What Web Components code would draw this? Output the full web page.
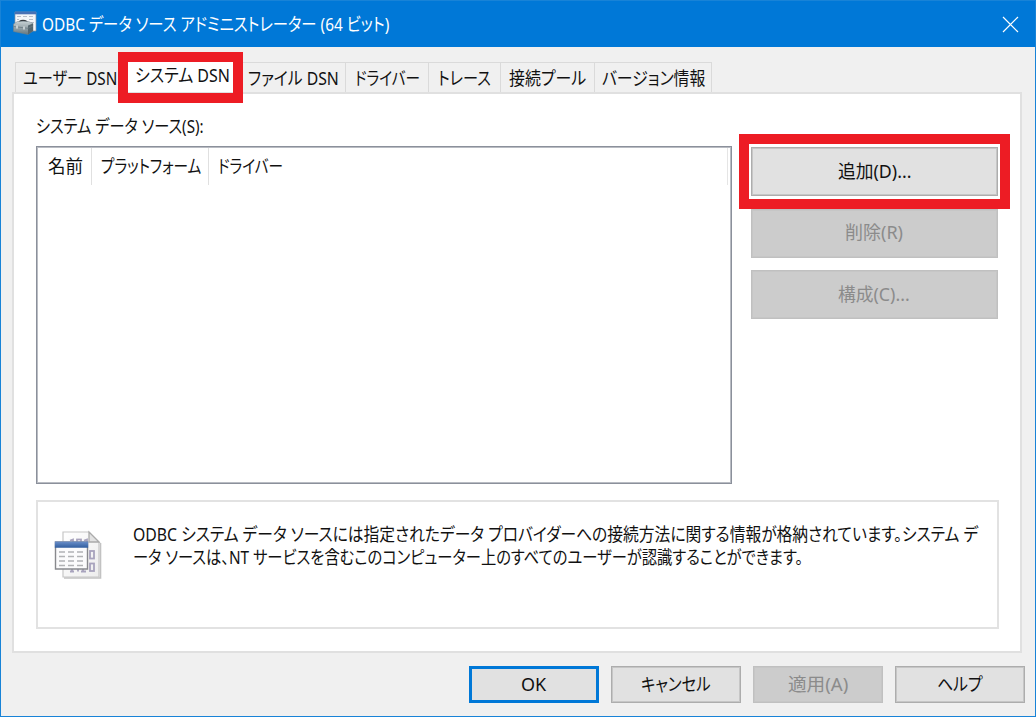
<!DOCTYPE html>
<html lang="ja">
<head>
<meta charset="utf-8">
<title>ODBC データ ソース アドミニストレーター (64 ビット)</title>
<style>
  html, body { margin: 0; height: 100%; overflow: hidden; }
  body {
    font: 18px/24px "Noto Sans", "Noto Sans CJK JP", sans-serif;
    font-feature-settings: "palt";
    color: #111;
  }
</style>
</head>
<body>
<odbc-dialog></odbc-dialog>

<script>
// One line of text squeezed to a given width
class FitText extends HTMLElement {
  constructor() {
    super();
    this.attachShadow({ mode: 'open' }).innerHTML = `
      <style>
        :host { display: block; flex: none; height: 24px; line-height: 24px; white-space: nowrap; }
        span { display: inline-block; transform-origin: 0 50%; }
      </style>
      <span><slot></slot></span>
    `;
  }

  connectedCallback() {
    const span = this.shadowRoot.querySelector('span');
    const width = Number(this.getAttribute('w'));
    const natural = span.offsetWidth;
    this.style.width = width + 'px';
    span.style.transform = `scaleX(${width / natural})`;
    // the box keeps its natural width after scaling, take the rest back
    if (natural > width) span.style.marginRight = (width - natural) + 'px';
  }
}

class TitleBar extends HTMLElement {
  constructor() {
    super();
    this.attachShadow({ mode: 'open' }).innerHTML = `
      <style>
        :host { display: flex; align-items: center; height: 46px; padding: 0 16px 0 12px; background: #0078d7; color: #fff; }
        .icon { flex: none; margin: 0 5px 2px 0; }
        .close { margin-left: auto; }
      </style>
      <svg class="icon" width="24" height="24" viewBox="0 0 24 24">
        <defs>
          <linearGradient id="box" x2="0" y2="1"><stop stop-color="#c5d0d3"/><stop offset="1" stop-color="#65777e"/></linearGradient>
        </defs>
        <path d="M2 1h21v19H2z" fill="#f3f5f8" stroke="#8995a5" stroke-width=".7"/>
        <path d="M2 .7h21v2.600H2z" fill="#4771b5"/>
        <path d="M4 5.500h4M10 5.500h4M16 5.500h4M4 8.500h2M16 8.500h4M18 11.500h3" stroke="#b7bdc7"/>
        <path d="M6 12.500c0-4 8-4 8.500 0" fill="none" stroke="#363c40" stroke-width="1.600"/>
        <path d="M.5 13l4-2.500h11l4.500 2v7.500l-5 3.500-14.500-3z" fill="url(#box)" stroke="#71828a" stroke-width=".5"/>
        <path d="M15 14.500l5-2v7.500l-5 3.500z" fill="#56676f"/>
        <path d="M.5 15.500l14.500 1.800 5-2.300" fill="none" stroke="#687a82" stroke-width=".8"/>
        <path d="M4 14.500v3M11 15.500v3" stroke="#e8eef0" stroke-width="1.300"/>
      </svg>
      <slot></slot>
      <svg class="close" width="17" height="17" viewBox="0 0 17 17">
        <path d="M1 1l15 15M16 1L1 16" stroke="#fff" stroke-width="1.2"/>
      </svg>
    `;
  }
}

class TabItem extends HTMLElement {
  constructor() {
    super();
    this.attachShadow({ mode: 'open' }).innerHTML = `
      <style>
        :host {
          display: flex; align-items: center; justify-content: center; box-sizing: border-box;
          height: 30px; border: 1px solid #dadada; border-width: 1px 1px 0 0; background: #f0f0f0;
        }
        :host([first]) { border-left-width: 1px; padding-left: 3px; }
        :host([selected]) { background: #fff; padding: 0 0 5px 2px; border-color: #fff; }
      </style>
      <slot></slot>
    `;
  }
  connectedCallback() {
    this.style.width = this.getAttribute('size') + 'px';
  }
}

class PushButton extends HTMLElement {
  constructor() {
    super();
    this.attachShadow({ mode: 'open' }).innerHTML = `
      <style>
        :host {
          display: flex; align-items: center; justify-content: center; box-sizing: border-box;
          width: 130px; height: 37px; padding: 0 1px 2px 0; border: 1px solid #adadad; background: #e1e1e1;
          box-shadow: inset 0 0 0 1px #c6c6c6;
        }
        :host([wide]) { width: 247px; height: 49px; }
        :host([default]) { border: 3px solid #0078d7; box-shadow: none; }
        :host([disabled]) { background: #ccc; border-color: #c0c0c0; color: #8b8b8b; }
      </style>
      <slot></slot>
    `;
  }
}

class SourceList extends HTMLElement {
  constructor() {
    super();
    this.attachShadow({ mode: 'open' }).innerHTML = `
      <style>
        :host {
          display: block; box-sizing: border-box; width: 696px; height: 338px; padding: 1px;
          border: 1px solid #8b909b; box-shadow: inset 0 0 0 1px #b9bcc3; background: #fff;
        }
        .head { display: flex; height: 37px; margin-right: 2px; border-right: 1px solid #e5e5e5; }
        .col { display: flex; align-items: center; box-sizing: border-box; padding: 0 0 1px 9px; border-right: 1px solid #e0e0e0; }
        .name { width: 54px; padding-left: 10px; }
        .platform { width: 117px; }
        .driver { border: 0; }
      </style>
      <div class="head">
        <div class="col name"><fit-text w="35">名前</fit-text></div>
        <div class="col platform"><fit-text w="100">プラットフォーム</fit-text></div>
        <div class="col driver"><fit-text w="65">ドライバー</fit-text></div>
      </div>
    `;
  }
}

class InfoBox extends HTMLElement {
  constructor() {
    super();
    this.attachShadow({ mode: 'open' }).innerHTML = `
      <style>
        :host { display: flex; box-sizing: border-box; width: 963px; height: 129px; border: 2px solid #e2e2e2; padding: 20px 0 0 16px; }
        svg { flex: none; margin: 8px 31px 0 0; }
        .text { display: flex; flex-direction: column; }
        .text fit-text { height: 23px; }
      </style>
      <svg width="48" height="50" viewBox="0 0 48 50">
        <defs>
          <linearGradient id="page" x2="1" y2="1"><stop stop-color="#fff"/><stop offset="1" stop-color="#ededed"/></linearGradient>
          <linearGradient id="bar" x2="0" y2="1"><stop stop-color="#6b8fc9"/><stop offset="1" stop-color="#315e9f"/></linearGradient>
        </defs>
        <path d="M10 48h36.500V13" fill="none" stroke="#c2c2c2" stroke-width="1.600"/>
        <path d="M9 2h26l10 10v35H9z" fill="url(#page)" stroke="#c6c6c6" stroke-width="1.200"/>
        <path d="M35 2v10h10z" fill="#e2e2e2" stroke="#ababab" stroke-width="1.300"/>
        <g fill="none" stroke="#a8a3bd" stroke-width="1.800">
          <path d="M16 10.500l3-1V14M30 10.500l3-1V14"/>
          <rect x="23" y="9.500" width="4" height="8"/>
          <rect x="36" y="21" width="4" height="7.500"/>
          <rect x="36" y="33.500" width="4" height="7.500"/>
          <path d="M18 38v3.500M24 38v3.500M29 38v3.500M16 41.500h4M27 41.500h5"/>
        </g>
        <path d="M1.500 12h32v27h-32z" fill="#fbfbfc" stroke="#88898d" stroke-width="1.400"/>
        <path d="M.8 11.500h33.400v6.200H.8z" fill="url(#bar)"/>
        <path d="M5 22h6M14 22h6M23 22h6M5 26.500h6M14 26.500h6M23 26.500h6M5 31h6M14 31h6M23 31h6M5 35.500h6M14 35.500h6M23 35.500h6" stroke="#b1b2b5" stroke-width="1.500"/>
      </svg>
      <div class="text">
        <fit-text w="845">ODBC システム データ ソースには指定されたデータ プロバイダーへの接続方法に関する情報が格納されています。システム デ</fit-text>
        <fit-text w="670">ータ ソースは、NT サービスを含むこのコンピューター上のすべてのユーザーが認識することができます。</fit-text>
      </div>
    `;
  }
}

// Red frame drawn over a control to point it out
class RedMark extends HTMLElement {
  constructor() {
    super();
    this.attachShadow({ mode: 'open' }).innerHTML = `
      <style>
        :host { position: absolute; box-sizing: border-box; border: 10px solid #ed1c24; pointer-events: none; }
      </style>
    `;
  }
}

class OdbcDialog extends HTMLElement {
  constructor() {
    super();
    this.attachShadow({ mode: 'open' }).innerHTML = `
      <style>
        :host { display: block; position: relative; box-sizing: border-box; width: 1036px; height: 717px; border: 1px solid #1883d7; background: #f0f0f0; }
        .tabs { display: flex; margin: 15px 0 0 14px; }
        .panel { box-sizing: border-box; width: 1010px; height: 561px; margin-left: 11px; border: 2px solid #e0e0e0; background: #fff; padding: 20px 0 0 22px; }
        .main { display: flex; gap: 19px; margin: 8px 0 16px; }
        .side { display: flex; flex-direction: column; gap: 12.5px; padding-top: 1px; }
        .footer { display: flex; justify-content: flex-end; gap: 12px; margin: 13px 10px 0 0; }
        .mark-tab { left: 117px; top: 51px; width: 125px; height: 51px; }
        .mark-add { left: 738px; top: 133px; width: 271px; height: 75px; }
      </style>
      <title-bar><fit-text w="347">ODBC データ ソース アドミニストレーター (64 ビット)</fit-text></title-bar>
      <div class="tabs">
        <tab-item first size="106"><fit-text w="94">ユーザー DSN</fit-text></tab-item>
        <tab-item selected size="121"><fit-text w="95">システム DSN</fit-text></tab-item>
        <tab-item size="104"><fit-text w="91">ファイル DSN</fit-text></tab-item>
        <tab-item size="83"><fit-text w="65">ドライバー</fit-text></tab-item>
        <tab-item size="72"><fit-text w="53">トレース</fit-text></tab-item>
        <tab-item size="94"><fit-text w="77">接続プール</fit-text></tab-item>
        <tab-item size="117"><fit-text w="103">バージョン情報</fit-text></tab-item>
      </div>
      <div class="panel">
        <fit-text w="168">システム データ ソース(S):</fit-text>
        <div class="main">
          <source-list></source-list>
          <div class="side">
            <push-button wide><fit-text w="73">追加(D)...</fit-text></push-button>
            <push-button wide disabled><fit-text w="58">削除(R)</fit-text></push-button>
            <push-button wide disabled><fit-text w="72">構成(C)...</fit-text></push-button>
          </div>
        </div>
        <info-box></info-box>
      </div>
      <div class="footer">
        <push-button default><fit-text w="25">OK</fit-text></push-button>
        <push-button><fit-text w="70">キャンセル</fit-text></push-button>
        <push-button disabled><fit-text w="60">適用(A)</fit-text></push-button>
        <push-button><fit-text w="46">ヘルプ</fit-text></push-button>
      </div>
      <red-mark class="mark-tab"></red-mark>
      <red-mark class="mark-add"></red-mark>
    `;
  }
}

customElements.define('fit-text', FitText);
customElements.define('title-bar', TitleBar);
customElements.define('tab-item', TabItem);
customElements.define('push-button', PushButton);
customElements.define('source-list', SourceList);
customElements.define('info-box', InfoBox);
customElements.define('red-mark', RedMark);
customElements.define('odbc-dialog', OdbcDialog);
</script>
</body>
</html>
